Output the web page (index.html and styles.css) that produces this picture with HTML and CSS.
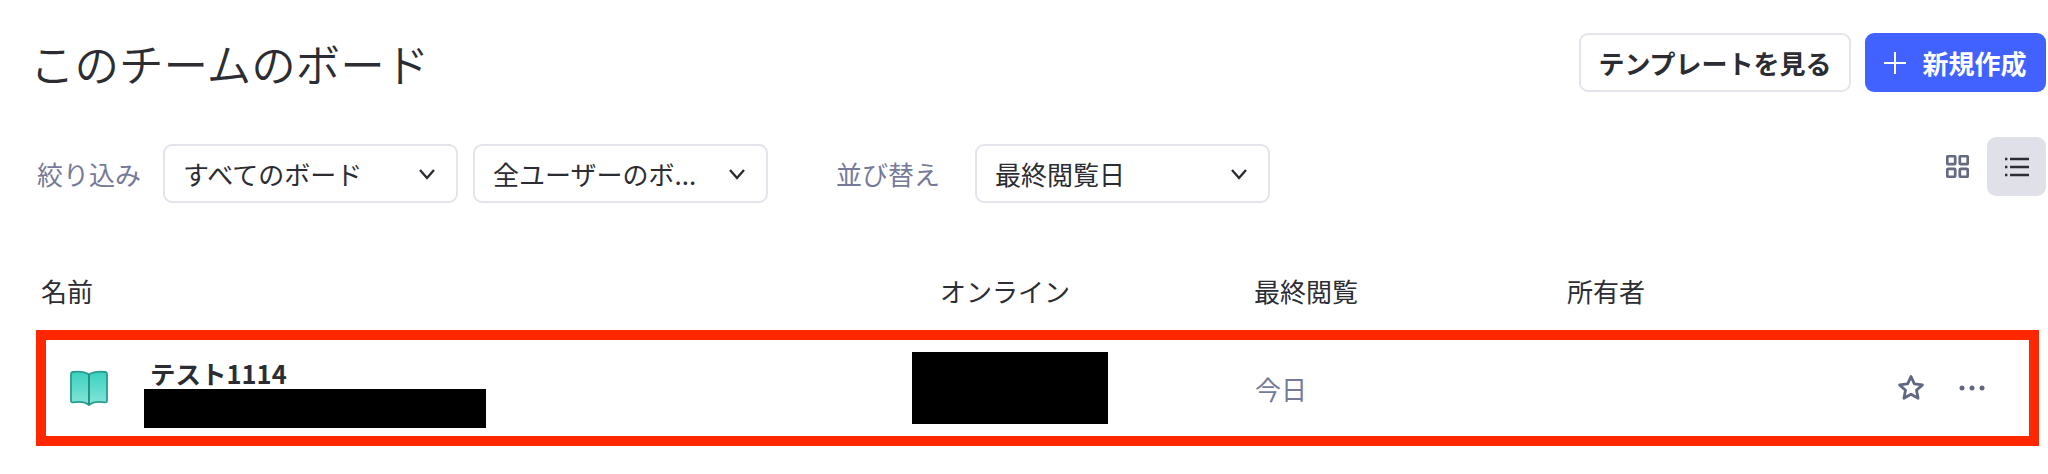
FILE: index.html
```html
<!DOCTYPE html>
<html lang="ja">
<head>
  <meta charset="UTF-8" />
  <title>このチームのボード</title>
  <link rel="stylesheet" href="styles.css">
</head>
<body>
  <div class="page-head">
    <h1>このチームのボード</h1>
    <div class="head-actions">
      <button class="btn btn-outline">テンプレートを見る</button>
      <button class="btn btn-primary">
        <svg class="plus-icon" viewBox="0 0 22 22"><path d="M11 0v22M0 11h22" /></svg>
        新規作成
      </button>
    </div>
  </div>

  <div class="toolbar">
    <div class="filters">
      <span class="filter-label">絞り込み</span>
      <div class="select">
        <span>すべてのボード</span>
        <svg class="chevron" viewBox="0 0 18 12"><path d="M2 2l7 8 7-8" /></svg>
      </div>
      <div class="select">
        <span>全ユーザーのボ...</span>
        <svg class="chevron" viewBox="0 0 18 12"><path d="M2 2l7 8 7-8" /></svg>
      </div>
      <span class="filter-label sort-label">並び替え</span>
      <div class="select">
        <span>最終閲覧日</span>
        <svg class="chevron" viewBox="0 0 18 12"><path d="M2 2l7 8 7-8" /></svg>
      </div>
    </div>
    <div class="view-toggle">
      <div class="view-btn">
        <svg class="grid-icon" viewBox="0 0 22 22">
          <rect x="1.2" y="1.2" width="7.6" height="7.6" rx="1" />
          <rect x="13.2" y="1.2" width="7.6" height="7.6" rx="1" />
          <rect x="1.2" y="13.2" width="7.6" height="7.6" rx="1" />
          <rect x="13.2" y="13.2" width="7.6" height="7.6" rx="1" />
        </svg>
      </div>
      <div class="view-btn active">
        <svg class="list-icon" viewBox="0 0 24 20">
          <path d="M5 2h19M5 10h19M5 18h19" />
          <path d="M0 2h2.400M0 10h2.400M0 18h2.400" />
        </svg>
      </div>
    </div>
  </div>

  <div class="table-head">
    <div>名前</div>
    <div>オンライン</div>
    <div>最終閲覧</div>
    <div>所有者</div>
  </div>

  <div class="board-row">
    <div class="name-cell">
      <svg class="book-icon" viewBox="0 0 38 36">
        <defs>
          <linearGradient id="bookFill" x1="0" y1="0" x2="0" y2="1">
            <stop offset="0" stop-color="#3ad0bf" />
            <stop offset="1" stop-color="#86e6d8" />
          </linearGradient>
        </defs>
        <path d="M19 4C15 1.200 8 .8 2.500 1.500 1.500 1.700 1 2.500 1 3.500v27c0 1 .8 1.600 1.800 1.400C8 31 15 31 19 34.500c4-3.500 11-3.500 16.200-2.600 1 .2 1.800-.4 1.800-1.400v-27c0-1-.5-1.800-1.500-2C30 .8 23 1.200 19 4z" fill="url(#bookFill)" stroke="#2a9c90" stroke-width="1.800" />
        <path d="M19 4v30" fill="none" stroke="#22877d" stroke-width="1.800" />
      </svg>
      <div class="name-text">
        <div class="board-title">テスト1114</div>
        <div class="redacted redacted-name"></div>
      </div>
    </div>
    <div>
      <div class="redacted redacted-online"></div>
    </div>
    <div class="last-cell">今日</div>
    <div class="actions-cell">
      <svg class="star-icon" viewBox="0 0 24 24">
        <path d="M12 2.200l2.900 6.300 6.900.8-5.100 4.700 1.400 6.800L12 17.400l-6.100 3.400 1.400-6.800-5.100-4.700 6.900-.8z" />
      </svg>
      <svg class="more-icon" viewBox="0 0 26 6">
        <circle cx="3" cy="3" r="2.500" />
        <circle cx="13" cy="3" r="2.500" />
        <circle cx="23" cy="3" r="2.500" />
      </svg>
    </div>
  </div>
</body>
</html>
```

FILE: styles.css
```css
* {
  margin: 0;
  padding: 0;
  box-sizing: border-box;
}

body {
  font-family: 'Noto Sans CJK JP', 'Noto Sans', sans-serif;
  background: white;
  color: #2c2d33;
  overflow: hidden;
}

.page-head {
  display: flex;
  justify-content: space-between;
  align-items: center;
  margin-top: 33px;
  padding: 0 2px 0 30px;
  height: 59px;
}

h1 {
  font-size: 44.5px;
  font-weight: 350;
  line-height: 59px;
}

.head-actions {
  display: flex;
  gap: 14px;
}

.btn {
  height: 59px;
  border-radius: 9px;
  font-family: inherit;
  font-size: 26px;
  font-weight: 700;
  display: flex;
  align-items: center;
  justify-content: center;
}

.btn-outline {
  width: 272px;
  background: white;
  border: 2px solid #e4e4ec;
  color: #2c2d33;
}

.btn-primary {
  width: 181px;
  gap: 16px;
  background: #4262ff;
  border: none;
  color: white;
}

.plus-icon {
  width: 22px;
  height: 22px;
  fill: none;
  stroke: white;
  stroke-width: 2;
}

.toolbar {
  display: flex;
  justify-content: space-between;
  margin-top: 45px;
  padding-right: 2px;
}

.filters {
  display: flex;
  align-items: center;
  margin-top: 7px;
  padding-left: 37px;
}

.filter-label {
  width: 126px;
  font-size: 26px;
  font-weight: 400;
  color: #767a98;
}

.sort-label {
  width: 139px;
  margin-left: 53px;
}

.select {
  width: 295px;
  height: 59px;
  padding: 0 20px 0 18px;
  margin-right: 15px;
  border: 2px solid #e4e4ec;
  border-radius: 9px;
  display: flex;
  align-items: center;
  justify-content: space-between;
  font-size: 26px;
  font-weight: 400;
}

.filters .select:last-child {
  margin-right: 0;
}

.chevron {
  width: 18px;
  height: 12px;
  fill: none;
  stroke: #2c2d33;
  stroke-width: 2.4;
}

.view-toggle {
  display: flex;
}

.view-btn {
  width: 59px;
  height: 59px;
  border-radius: 9px;
  display: flex;
  align-items: center;
  justify-content: center;
}

.view-btn.active {
  background: #dfe0e8;
}

.grid-icon {
  width: 23px;
  height: 23px;
  fill: none;
  stroke: #656982;
  stroke-width: 2.600;
}

.list-icon {
  width: 24px;
  height: 20px;
  fill: none;
  stroke: #2c2d33;
  stroke-width: 2.400;
}

.table-head {
  display: grid;
  grid-template-columns: 899px 314px 313px 1fr;
  margin-top: 69px;
  padding-left: 41px;
  font-size: 26px;
  font-weight: 400;
  line-height: 38px;
}

.board-row {
  display: grid;
  grid-template-columns: 866px 343px 312px 1fr;
  align-items: center;
  width: 2003px;
  height: 116px;
  margin: 20px 0 0 36px;
  border: 10px solid #ff2600;
}

.name-cell {
  display: flex;
  align-items: center;
  padding-left: 24px;
}

.book-icon {
  width: 38px;
  height: 37px;
  flex-shrink: 0;
}

.name-text {
  margin-left: 36px;
  padding-top: 9px;
}

.board-title {
  margin-left: 6px;
  font-size: 25.5px;
  font-weight: 700;
  line-height: 32px;
}

.redacted {
  background: black;
}

.redacted-name {
  width: 342px;
  height: 39px;
}

.redacted-online {
  width: 196px;
  height: 72px;
}

.last-cell {
  font-size: 26px;
  font-weight: 400;
  color: #767a98;
}

.actions-cell {
  display: flex;
  align-items: center;
  justify-content: flex-end;
  gap: 34px;
  padding-right: 44px;
}

.star-icon {
  width: 28px;
  height: 28px;
  fill: none;
  stroke: #626781;
  stroke-width: 2.400;
  stroke-linejoin: round;
}

.more-icon {
  width: 26px;
  height: 6px;
  fill: #626781;
}
```
